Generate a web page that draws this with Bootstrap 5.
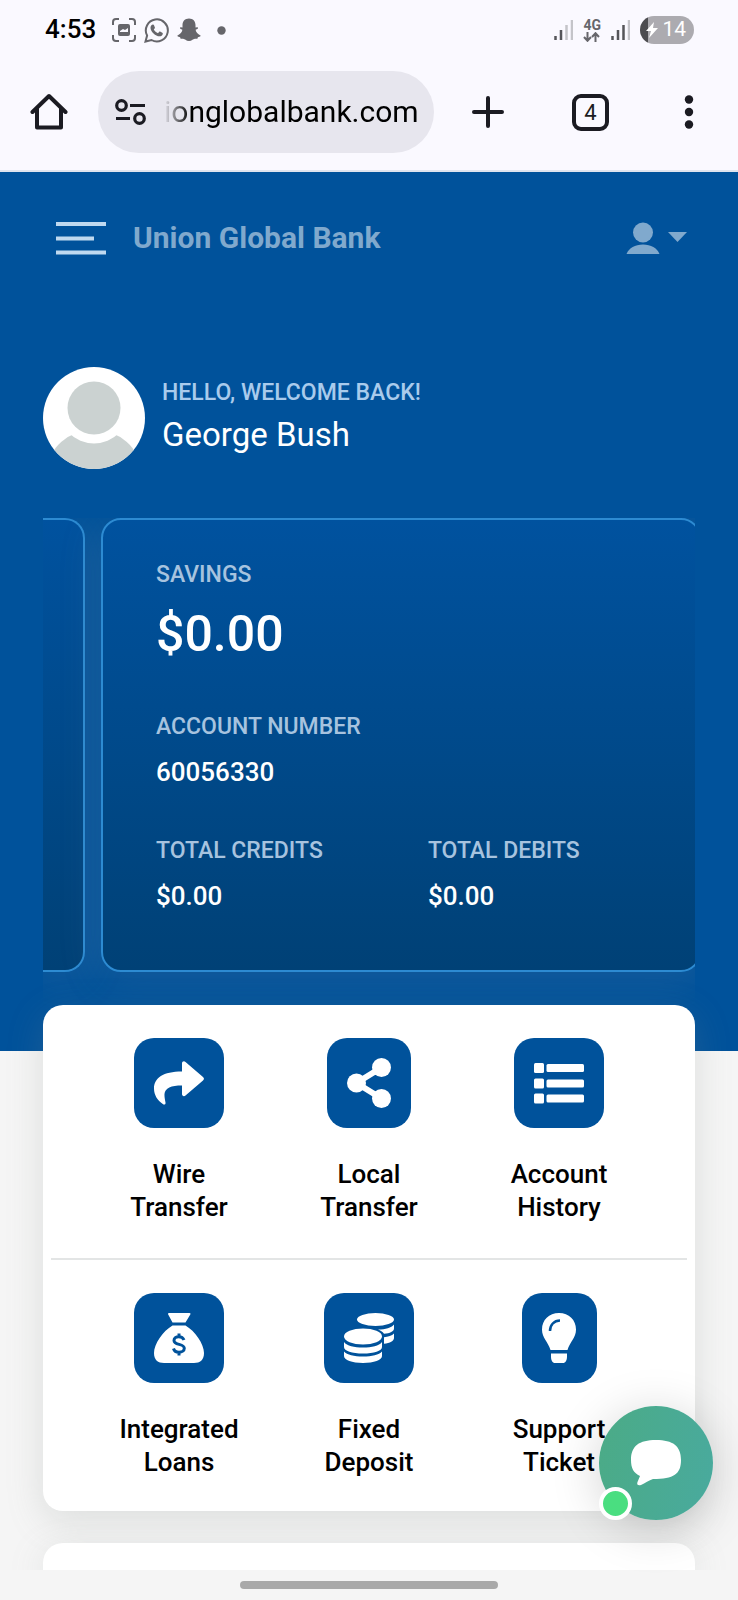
<!DOCTYPE html>
<html lang="en">
<head>
<meta charset="utf-8">
<meta name="viewport" content="width=device-width, initial-scale=1">
<title>Union Global Bank</title>
<link href="https://cdn.jsdelivr.net/npm/bootstrap@5.3.0/dist/css/bootstrap.min.css" rel="stylesheet">
<style>
  :root { --brand: #00529b; --chrome: #faf9ff; --page: #f5f5f5; --ink: #1b1b22; --edge: 43px; }
  body { font-family: Roboto, "Liberation Sans", sans-serif; background: var(--page); line-height: 1.2; }
  svg { display: block; }
  button { border: 0; background: none; padding: 0; color: inherit; }

  /* phone chrome */
  .phone-top { background: var(--chrome); border-bottom: 2px solid #dfe4ee; }
  .status-row { height: 60px; padding: 0 44px 0 45px; color: #66666b; }
  .clock { font-size: 26px; font-weight: 500; color: #000; }
  .net-label { font-size: 14px; font-weight: 700; line-height: 14px; margin: 0 10px; }
  .battery { width: 54px; height: 28px; border-radius: 14px; color: #fff; font-size: 21px; margin-left: 10px;
    background: linear-gradient(90deg, #4c4c50 8px, #acabb0 8px); }
  .tool-row { padding: 11px 44px 17px 30px; color: var(--ink); }
  .address { height: 82px; flex: 0 0 336px; border-radius: 41px; background: #e7e6ee; padding: 0 16px; margin-left: 30px; }
  .address input { border: 0; background: none; outline: 0; padding: 0; width: 254px; font-size: 30px; color: #000;
    -webkit-mask-image: linear-gradient(90deg, transparent, #000 26px); mask-image: linear-gradient(90deg, transparent, #000 26px); }
  .tool-buttons { padding-left: 37px; }
  .tab-count { width: 37px; height: 37px; border: 4px solid var(--ink); border-radius: 9px; font-size: 22px; line-height: 29px; }
  .phone-bottom { height: 30px; }
  .home-pill { width: 258px; height: 8px; border-radius: 4px; background: #a9a9a9; }

  /* bank page */
  .hero { background: var(--brand); padding: 0 var(--edge) 79px; color: #fff; }
  .app-bar { height: 132px; padding: 0 8px 0 13px; color: #80a9cd; }
  .brand-name { font-size: 30px; font-weight: 700; color: inherit; padding-left: 27px; }
  .menu-lines { color: #bfd9f0; }
  .greeting { padding: 63px 0 49px; gap: 17px; }
  .caption-text { font-size: 23px; font-weight: 500; line-height: 27px; color: #a9cbec; }
  .user-name { font-size: 33px; line-height: 40px; padding: 9px 0 3px; }
  .account-strip { gap: 16px; overflow: hidden; margin-bottom: -33px; padding-bottom: 33px; }
  .account-box { border: 2px solid #2d8bd2; border-radius: 20px; background: linear-gradient(#00529f, #004176);
    box-shadow: 0 8px 40px 4px rgba(140, 150, 153, .14); }
  .account-prev { flex: 0 0 42px; border-left: 0; border-radius: 0 20px 20px 0; }
  .account-main { flex: 0 0 92%; padding: 41px 23px 58px 53px; }
  .account-main .caption-text { color: #a7c3df; }
  .balance { font-size: 50px; font-weight: 500; line-height: 60px; margin: 16px 0 49px; }
  .figure-text { font-size: 26px; font-weight: 500; line-height: 32px; margin-top: 16px; }
  .totals { padding-top: 49px; }
  .sheet { background: #fff; box-shadow: 0 10px 36px rgba(130, 142, 137, .22); }
  .services { margin: -46px var(--edge) 32px; border-radius: 20px; padding: 33px 8px 32px; }
  .service-row { padding: 0 33px; }
  .service { flex: 1 1 0; color: #000; font-size: 26px; line-height: 33px; font-weight: 500; text-decoration: none; text-align: center; }
  .service-icon { width: 90px; height: 90px; border-radius: 20px; background: var(--brand); margin: 0 auto 30px; }
  .service-icon.slim { width: 84px; }
  .service-icon.narrow { width: 75px; }
  .divider { border: 0; height: 2px; background: #e3e5e5; opacity: 1; margin: 34px 0 33px; }
  .next-sheet { margin: 0 var(--edge); min-height: 25px; border-radius: 20px 20px 0 0; }
  .page-area { overflow: hidden; }
  .chat { right: 25px; bottom: 80px; width: 114px; height: 114px; border-radius: 50%; color: #fff;
    background: linear-gradient(100deg, #4bab86, #49aa9e); box-shadow: 0 8px 50px rgba(0, 0, 0, .18); }
  .online { left: 0; bottom: 0; width: 33px; height: 33px; border: 4px solid #fff; border-radius: 50%; background: #4ade80; }
</style>
</head>
<body class="min-vh-100 d-flex flex-column">
<header class="phone-top">
  <div class="status-row d-flex align-items-center justify-content-between">
    <div class="d-flex align-items-center gap-2">
      <span class="clock me-2">4:53</span>
      <svg width="24" height="24" viewBox="0 0 24 24" fill="none" stroke="currentColor" stroke-width="2"><path d="M1 7V4a3 3 0 0 1 3-3h3M17 1h3a3 3 0 0 1 3 3v3M23 17v3a3 3 0 0 1-3 3h-3M7 23H4a3 3 0 0 1-3-3v-3"/><path fill="currentColor" stroke="none" fill-rule="evenodd" d="M8 6h8a2 2 0 0 1 2 2v8a2 2 0 0 1-2 2H8a2 2 0 0 1-2-2V8a2 2 0 0 1 2-2zm0 8h8v-4l-3 2-2-1-3 2z"/></svg>
      <svg width="25" height="25" viewBox="0 0 25 25"><path fill="none" stroke="currentColor" stroke-width="2" d="M1.500 23.500l1.600-6A11 11 0 1 1 7.500 22z"/><path fill="currentColor" d="M9 6.500c.6 0 .8.200 1 .7l.9 2.200c.1.400 0 .7-.3 1l-.8 1c1 1.800 2.400 3 4.200 3.800l1.200-1.400c.3-.3.500-.4.900-.2l2.200 1.100c.5.300.6.500.5 1-.3 1.800-1.700 2.600-3.200 2.600-4 0-9.100-4.600-9.100-8.600C6.500 8 7.600 6.500 9 6.500z"/></svg>
      <svg width="24" height="24" viewBox="0 0 24 24" fill="currentColor"><path d="M12 .5c4 0 6.500 2.800 6.500 6.500v2.500l1.800-.3c1 .2 1 1.200 0 1.700l-1.700.9c.4 2.400 2 4.500 4.900 5.600.5.500 0 1.200-2.600 1.800l-.5 1.600c-2.200-.2-3.300-.1-4.500.8-2.700 2-5.100 2-7.800 0-1.200-.9-2.300-1-4.500-.8l-.5-1.600C.5 18.600 0 17.900.5 17.400c2.900-1.100 4.500-3.200 4.900-5.600l-1.700-.9c-1-.5-1-1.500 0-1.700l1.800.3V7C5.500 3.300 8 .5 12 .5z"/></svg>
      <svg class="ms-2" width="9" height="9"><circle cx="4.500" cy="4.500" r="4.200" fill="currentColor"/></svg>
    </div>
    <div class="d-flex align-items-center">
      <svg width="19" height="20" viewBox="0 0 19 20"><path stroke="#55555a" stroke-width="2.500" d="M1.500 16v4M7 10v10"/><path stroke="#c4c4c9" stroke-width="2.500" d="M12.500 5v15M18 0v20"/></svg>
      <div class="net-label text-center">4G
        <svg width="17" height="10" viewBox="0 0 17 10" fill="none" stroke="currentColor" stroke-width="2"><path d="M4.500 0v8.500M1 5l3.500 3.800L8 5M12.500 10V1.500M9 5l3.500-3.800L16 5"/></svg>
      </div>
      <svg width="19" height="20" viewBox="0 0 19 20"><path stroke="#55555a" stroke-width="2.500" d="M1.500 16v4M7 10v10M12.500 5v15"/><path stroke="#c4c4c9" stroke-width="2.500" d="M18 0v20"/></svg>
      <div class="battery d-flex align-items-center justify-content-end pe-2 gap-1">
        <svg width="12" height="16" viewBox="0 0 12 16" fill="#fff"><path d="M8 0L0 9h5l-2 7 9-10H7z"/></svg>14
      </div>
    </div>
  </div>
  <div class="tool-row d-flex align-items-center">
    <button type="button" aria-label="Home"><svg width="38" height="38" viewBox="0 0 38 38" fill="none" stroke="currentColor" stroke-width="4" stroke-linejoin="round" stroke-linecap="round"><path d="M2.500 19L19 3l16.500 16M7 16v18.500h24V16"/></svg></button>
    <div class="address d-flex align-items-center justify-content-between">
      <svg width="32" height="26" viewBox="0 0 32 26" fill="none" stroke="currentColor" stroke-width="3.200"><circle cx="7.500" cy="6.500" r="4.800"/><path d="M16 6.500h15M2 19.500h14"/><circle cx="25.500" cy="19.500" r="4.800"/></svg>
      <input type="text" aria-label="Address" value="ionglobalbank.com">
    </div>
    <div class="tool-buttons flex-grow-1 d-flex align-items-center justify-content-between">
      <button type="button" aria-label="New tab"><svg width="34" height="34" viewBox="0 0 34 34" stroke="currentColor" stroke-width="4" stroke-linecap="round"><path d="M17 3v28M3 17h28"/></svg></button>
      <button type="button" aria-label="Tabs" class="tab-count me-2">4</button>
      <button type="button" aria-label="More"><svg width="10" height="34" viewBox="0 0 10 34" fill="currentColor"><circle cx="5" cy="4.500" r="4.200"/><circle cx="5" cy="17" r="4.200"/><circle cx="5" cy="29.500" r="4.200"/></svg></button>
    </div>
  </div>
</header>

<main class="page-area flex-grow-1 d-flex flex-column">
  <section class="hero">
    <nav class="app-bar d-flex align-items-center">
      <button type="button" class="menu-lines" aria-label="Menu"><svg width="50" height="34" viewBox="0 0 50 34" stroke="currentColor" stroke-width="4"><path d="M0 3h50M0 17.500h38M0 31.500h50"/></svg></button>
      <a class="brand-name text-decoration-none me-auto" href="#">Union Global Bank</a>
      <button type="button" class="d-flex align-items-center" aria-label="Account menu">
        <svg width="34" height="32" viewBox="0 0 34 32" fill="currentColor"><circle cx="17" cy="10.500" r="10"/><path d="M.500 32C3 26 9 22.500 17 22.500S31 26 33.500 32z"/></svg>
        <svg class="ms-2" width="19" height="14" viewBox="0 0 19 14" fill="currentColor"><path d="M0 1h19L9.500 11z"/></svg>
      </button>
    </nav>
    <div class="greeting d-flex align-items-center">
      <svg width="102" height="102" viewBox="0 0 102 102"><defs><clipPath id="face"><circle cx="51" cy="51" r="51"/></clipPath></defs><g clip-path="url(#face)"><path fill="#fff" d="M0 0h102v102H0z"/><ellipse cx="51" cy="103" rx="46" ry="40" fill="#cbd2d1"/><circle cx="51" cy="41" r="35.500" fill="#fff"/><circle cx="51" cy="41" r="26.500" fill="#cbd2d1"/></g></svg>
      <div>
        <div class="caption-text">HELLO, WELCOME BACK!</div>
        <div class="user-name">George Bush</div>
      </div>
    </div>
    <div class="account-strip d-flex">
      <div class="account-box account-prev"></div>
      <article class="account-box account-main">
        <div class="caption-text">SAVINGS</div>
        <div class="balance">$0.00</div>
        <div class="caption-text">ACCOUNT NUMBER</div>
        <div class="figure-text">60056330</div>
        <div class="row totals">
          <div class="col-6">
            <div class="caption-text">TOTAL CREDITS</div>
            <div class="figure-text">$0.00</div>
          </div>
          <div class="col-6">
            <div class="caption-text">TOTAL DEBITS</div>
            <div class="figure-text">$0.00</div>
          </div>
        </div>
      </article>
    </div>
  </section>

  <section class="services sheet">
    <div class="service-row d-flex">
      <a class="service" href="#">
        <div class="service-icon d-flex align-items-center justify-content-center"><svg width="50" height="50" viewBox="0 0 50 50" fill="#fff"><path d="M28 5.500c0-2 2-2.800 3.500-1.500l17.500 15c1.300 1.200 1.300 2.400 0 3.500L31.500 37.500C30 38.800 28 38 28 36v-8.500C17 27.500 11 30 10.500 36c-.2 3 .5 6 1 8.500.3 1.800-1.200 2.800-2.700 1.500C3.500 42.500 0 37 0 30.500 0 20 9 13.500 28 13.500z"/></svg></div>
        Wire<br>Transfer
      </a>
      <a class="service" href="#">
        <div class="service-icon slim d-flex align-items-center justify-content-center"><svg width="44" height="50" viewBox="0 0 44 50"><path d="M34.500 9.500L9.500 25l25 15.500" fill="none" stroke="#fff" stroke-width="6"/><g fill="#fff"><circle cx="34.500" cy="9.500" r="9.500"/><circle cx="9.500" cy="25" r="9.500"/><circle cx="34.500" cy="40.500" r="9.500"/></g></svg></div>
        Local<br>Transfer
      </a>
      <a class="service" href="#">
        <div class="service-icon d-flex align-items-center justify-content-center"><svg width="50" height="42" viewBox="0 0 50 42" fill="#fff"><rect y="1" width="10" height="10" rx="1.500"/><rect y="16.500" width="10" height="10" rx="1.500"/><rect y="31.500" width="10" height="10" rx="1.500"/><rect x="12.500" y="2" width="37.500" height="8" rx="1.500"/><rect x="12.500" y="17.500" width="37.500" height="8" rx="1.500"/><rect x="12.500" y="32.500" width="37.500" height="8" rx="1.500"/></svg></div>
        Account<br>History
      </a>
    </div>
    <hr class="divider">
    <div class="service-row d-flex">
      <a class="service" href="#">
        <div class="service-icon d-flex align-items-center justify-content-center"><svg width="50" height="50" viewBox="0 0 50 50"><g fill="#fff"><path d="M15 0h20.500c1 0 1.300.8.800 1.600L31.500 9.500h-13L14.200 1.600C13.800.8 14 0 15 0zM18.500 12.500h13C41 18 50 31 50 40c0 7-4 10-10 10H10C4 50 0 47 0 40c0-9 9-22 18.500-27.500z"/></g><path fill="none" stroke="#00529b" stroke-width="3" d="M30 27c-1-2.500-3-3.300-5.300-3.300-2.700 0-4.700 1.500-4.700 3.800 0 5.200 10.300 2.500 10.300 7.800 0 2.300-2.200 4-5.300 4-2.700 0-4.800-1.300-5.500-3.800M25 20.500v3M25 39v3.500"/></svg></div>
        Integrated<br>Loans
      </a>
      <a class="service" href="#">
        <div class="service-icon d-flex align-items-center justify-content-center"><svg width="50" height="50" viewBox="0 0 50 50" fill="#fff"><ellipse cx="31.500" cy="6.500" rx="18.500" ry="6.500"/><path d="M50 11.500v4c0 3-4 4.800-10 5.300-1.500-2.300-3.500-3.300-6-4.300 8 0 13-1.500 16-5zM50 20.500v4.500c0 3-4 5-10 5.800v-6.500c4-.5 8-1.500 10-3.800z"/><ellipse cx="19" cy="23.500" rx="19" ry="8"/><path d="M0 29c3 4 10 5.500 19 5.500S35 33 38 29v5c0 4-8 6.500-19 6.500S0 38 0 34zM0 38.500c3 3.500 10 5 19 5s16-1.500 19-5V43c0 4-8 7-19 7S0 47 0 43z"/></svg></div>
        Fixed<br>Deposit
      </a>
      <a class="service" href="#">
        <div class="service-icon narrow d-flex align-items-center justify-content-center"><svg width="34" height="50" viewBox="0 0 34 50"><path fill="#fff" d="M17 0c10 0 17 7 17 16.500 0 8.500-6 12-8.500 20.500h-17C6 28.500 0 25 0 16.500 0 7 7 0 17 0zM9 40.500h16v3c0 4-1.500 6.500-4 6.500h-8c-2.500 0-4-2.500-4-6.500z"/><path fill="none" stroke="#00529b" stroke-width="2.500" d="M8 18c0-6 4-10.500 10-10.500"/></svg></div>
        Support<br>Ticket
      </a>
    </div>
  </section>
  <section class="next-sheet sheet flex-grow-1"></section>
</main>

<footer class="phone-bottom d-flex align-items-center justify-content-center"><div class="home-pill"></div></footer>

<button type="button" class="chat position-fixed d-flex align-items-center justify-content-center" aria-label="Open chat">
  <svg width="50" height="46" viewBox="0 0 50 46" fill="currentColor"><path d="M25 0c17 0 25 6 25 20S43 39 22 39c-4 1.500-8 4-12 6-3 1-4.500-.5-3.500-3l2.500-6C2.500 33 0 28 0 20 0 6 8 0 25 0z"/></svg>
  <span class="online position-absolute"></span>
</button>
<script src="https://cdn.jsdelivr.net/npm/bootstrap@5.3.0/dist/js/bootstrap.bundle.min.js"></script>
</body>
</html>
